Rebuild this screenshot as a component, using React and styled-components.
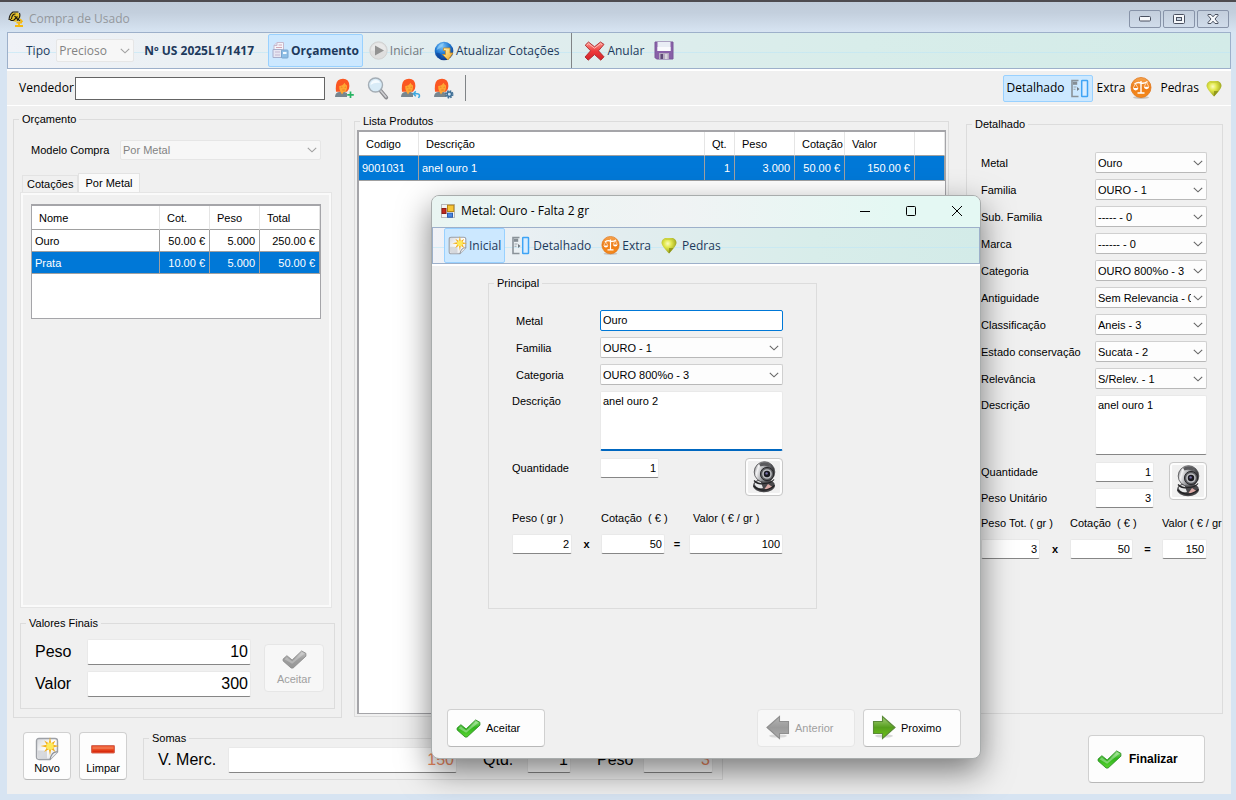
import React, { useEffect, useRef } from 'react'
import styled, { createGlobalStyle, css } from 'styled-components'

const GlobalStyle = createGlobalStyle`
    * {
        box-sizing: border-box;
    }
    body {
        margin: 0;
        background: #d7e4f2;
    }
    body, button, input, select, textarea {
        font-family: "Liberation Sans", Arial, sans-serif;
        font-size: 11px;
        line-height: 14px;
        color: #000;
    }
`

const uiFont = css`
    font-family: "Open Sans", "Noto Sans", sans-serif;
    font-size: 12px;
    line-height: 16px;
`

/* ---------- window ---------- */

const Window = styled.div`
    position: relative;
    min-height: 100vh;
    display: flex;
    flex-direction: column;
    border-top: 2px solid #4d4b4f;
`
const TitleBar = styled.header`
    ${uiFont}
    height: 30px;
    padding: 4px 7px 0 8px;
    display: flex;
    align-items: center;
    gap: 5px;
    background: linear-gradient(#c0ccda, #c3cfdd 35%, #d7e4f2);
    color: #94989d;
`
const TitleText = styled.span`
    flex: 1;
`
const CaptionButtons = styled.div`
    display: flex;
    gap: 2px;
`
const CaptionButton = styled.button`
    width: 32px;
    height: 18px;
    padding: 0;
    display: grid;
    place-items: center;
    border: 1px solid #8793a8;
    border-radius: 2px;
    background: linear-gradient(#c3cedc, #d0dcea);
`
const Client = styled.div`
    flex: 1;
    margin: 0 5px 6px 7px;
    display: flex;
    flex-direction: column;
    background: #f0f0f0;
`

/* ---------- toolbars ---------- */

const ToolStrip = styled.div`
    ${uiFont}
    height: 37px;
    display: flex;
    align-items: center;
    flex: none;
    gap: 2px;
    padding: 0 ${({ $inset }) => $inset}px;
    border: 1px solid #9db0ca;
    background:
        linear-gradient(transparent 19px, rgba(190, 230, 246, 0.6) 19px, rgba(190, 230, 246, 0.6) 20px, transparent 20px),
        linear-gradient(90deg, #f0f2f7, #e2edef 35%, #d8edea 70%, #d3ebe8);
    color: #1e395b;
`
const Edge = styled.div`
    height: ${({ $size }) => $size}px;
    flex: none;
    background: #fff;
`
const ToolButton = styled.button`
    ${uiFont}
    height: ${({ $height }) => $height || 35}px;
    display: flex;
    align-items: center;
    gap: ${({ $gap }) => $gap || 2}px;
    padding: 0 3px;
    border: 1px solid ${({ $active }) => ($active ? '#99d1ff' : 'transparent')};
    border-radius: 2px;
    background: ${({ $active }) => ($active ? '#cce8ff' : 'none')};
    color: ${({ $dark }) => ($dark ? '#000' : '#1e395b')};
    font-weight: ${({ $bold }) => ($bold ? 700 : 400)};
    white-space: nowrap;

    &:disabled {
        color: #75797d;
    }
`
const IconButton = styled.button`
    width: 24px;
    height: 26px;
    padding: 0;
    display: grid;
    place-items: center;
    border: none;
    background: none;
`
const TypeSelect = styled.div`
    margin-left: 4px;
`
const DocNumber = styled.strong`
    margin: 0 12px 0 8px;
    white-space: nowrap;
`
const ToolSeparator = styled.span`
    width: 1px;
    height: ${({ $height }) => $height}px;
    margin: 0 ${({ $gap }) => $gap}px;
    background: #808487;
`
const VendorBar = styled.div`
    ${uiFont}
    height: 34px;
    display: flex;
    align-items: center;
    padding: 0 5px 0 12px;
`
const VendorInput = styled.input`
    width: 250px;
    height: 23px;
    margin: 0 8px 0 1px;
    border: 1px solid #646464;
    background: #fff;
`
const VendorActions = styled.div`
    display: flex;
    gap: 9px;
    flex: 1;
    align-items: center;
`

/* ---------- form parts ---------- */

const Group = styled.fieldset`
    min-width: 0;
    margin: ${({ $margin }) => $margin || '0'};
    padding: 0;
    display: flex;
    flex-direction: column;
    border: 1px solid #dcdcdc;
`
const Legend = styled.legend`
    margin-left: 5px;
    padding: 0 3px;
    line-height: 14px;
`
const Label = styled.label`
    padding-left: ${({ $inset }) => $inset || 0}px;
    white-space: nowrap;
`
const BigLabel = styled.label`
    font-size: 16px;
    line-height: 20px;
    width: ${({ $width }) => $width}px;
`
const TextInput = styled.input`
    width: ${({ $width }) => $width || '100%'};
    min-width: 0;
    height: 20px;
    padding: 0 2px 1px;
    border: 1px solid #e9e9e9;
    border-bottom-color: #868686;
    border-radius: 2px;
    background: #fff;
    text-align: ${({ $left }) => ($left ? 'left' : 'right')};
    outline: none;
`
const FocusInput = styled(TextInput)`
    height: 21px;
    border: 1px solid #0078d7;
`
const BigInput = styled(TextInput)`
    height: 26px;
    font-size: 16px;
    line-height: 20px;
    color: ${({ $accent }) => ($accent ? '#f08a62' : '#000')};
`
const TextArea = styled.textarea`
    display: block;
    width: 100%;
    height: 60px;
    padding: 2px;
    border: 1px solid #e9e9e9;
    border-bottom: ${({ $active }) => ($active ? '2px solid #0067c0' : '1px solid #868686')};
    border-radius: 2px;
    background: #fff;
    resize: none;
    outline: none;
`
const SelectBox = styled.div`
    position: relative;
    width: ${({ $width }) => $width || 'auto'};

    svg {
        position: absolute;
        right: 4px;
        top: calc(50% - 3px);
        pointer-events: none;
    }
`
const NativeSelect = styled.select`
    ${({ $ui }) => $ui && uiFont}
    appearance: none;
    display: block;
    width: 100%;
    height: ${({ $height }) => $height || 21}px;
    padding: 0 15px 0 2px;
    border: 1px solid #d0d0d0;
    border-bottom-color: #b8b8b8;
    border-radius: 2px;
    background: #fdfdfd;

    &:disabled {
        border-color: #e6e6e6;
        background: #f7f7f7;
        color: #838383;
        opacity: 1;
    }

    &:disabled + svg {
        opacity: 0.6;
    }
`
const PushButton = styled.button`
    width: ${({ $width }) => $width}px;
    height: ${({ $height }) => $height}px;
    padding: ${({ $stacked }) => ($stacked ? '0' : '0 8px')};
    display: flex;
    flex-direction: ${({ $stacked }) => ($stacked ? 'column' : 'row')};
    align-items: center;
    justify-content: ${({ $stacked }) => ($stacked ? 'center' : 'flex-start')};
    gap: ${({ $gap }) => $gap || 0}px;
    border: 1px solid #d0d0d0;
    border-bottom-color: #b8b8b8;
    border-radius: 4px;
    background: #fdfdfd;
    font-weight: ${({ $bold }) => ($bold ? 700 : 400)};
    font-size: ${({ $bold }) => ($bold ? 12 : 11)}px;

    &:disabled {
        border-color: #e6e6e6;
        background: #f7f7f7;
        color: #a0a0a0;
    }
`
const CameraButton = styled.button`
    width: 38px;
    height: 38px;
    padding: 2px;
    display: grid;
    place-items: center;
    border: 1px solid #c8c8c8;
    border-radius: 4px;
    background: #f0f0f0;
    box-shadow: inset 0 0 0 2px #fdfdfd;
`

/* ---------- main layout ---------- */

const Columns = styled.main`
    flex: 1;
    padding: 6px 8px 0 6px;
    display: grid;
    grid-template-columns: 329px minmax(0, 1fr) 257px;
`
const BudgetBody = styled.div`
    flex: 1;
    padding: 14px 6px 8px;
    display: flex;
    flex-direction: column;
`
const ModelRow = styled.div`
    display: flex;
    align-items: center;
    justify-content: space-between;
    padding: 0 14px 0 11px;
`
const Tabs = styled.div`
    display: flex;
    align-items: flex-end;
    margin-top: 13px;
    padding-left: 2px;
`
const Tab = styled.button`
    height: ${({ $active }) => ($active ? 20 : 17)}px;
    padding: 0 ${({ $active }) => ($active ? 6 : 4)}px ${({ $active }) => ($active ? 2 : 0)}px;
    margin-bottom: ${({ $active }) => ($active ? -1 : 0)}px;
    border: 1px solid #e3e3e3;
    border-bottom: none;
    background: ${({ $active }) => ($active ? '#fafafa' : '#f0f0f0')};
`
const TabPanel = styled.div`
    flex: 1;
    margin-right: 3px;
    padding: 11px 10px;
    border: 1px solid #e5e5e5;
    background: #f0f0f0;
    box-shadow: inset 0 0 0 2px #fafafa;
`
const FinalsBody = styled.div`
    padding: 9px 10px 11px 14px;
    display: flex;
    align-items: center;
    gap: 13px;
`
const FinalsFields = styled.div`
    flex: 1;
    display: grid;
    grid-template-columns: auto 1fr;
    align-items: center;
    row-gap: 6px;
`
const ProductsBody = styled.div`
    flex: 1;
    display: flex;
    padding: 2px;
`
const DetailBody = styled.div`
    padding: 21px 15px 0 14px;
`
const FormGrid = styled.div`
    display: grid;
    grid-template-columns: ${({ $columns }) => $columns};
    gap: 6px 0;
    align-items: center;
`
const TopLabel = styled(Label)`
    align-self: start;
    padding-top: 3px;
`
const PairRow = styled.div`
    display: flex;
    justify-content: space-between;
    align-items: flex-start;
    margin-top: 7px;
`
const CalcGrid = styled.div`
    display: grid;
    grid-template-columns: ${({ $columns }) => $columns};
    row-gap: 9px;
    margin-top: ${({ $top }) => $top}px;
    align-items: center;
`
const CalcLabel = styled.label`
    grid-column: span ${({ $span }) => $span || 2};
    padding-left: ${({ $inset }) => $inset || 0}px;
    white-space: pre;
`
const Operator = styled.span`
    text-align: center;
    font-weight: 700;
`

/* ---------- grids ---------- */

const GridBox = styled.div`
    width: 100%;
    height: ${({ $height }) => $height || 'auto'};
    border: 1px solid #a5a5a9;
    border-top-width: 2px;
    border-left-width: ${({ $edge }) => $edge || 1}px;
    background: #fff;
`
const Table = styled.table`
    width: 100%;
    table-layout: fixed;
    border-spacing: 0;
`
const Th = styled.th`
    height: 24px;
    padding: 0 2px 0 7px;
    border-right: 1px solid #e5e5e5;
    border-bottom: 1px solid #a0a0a0;
    font-weight: 400;
    text-align: left;
    white-space: nowrap;
`
const Td = styled.td`
    height: ${({ $height }) => $height || 22}px;
    padding: 0 4px 0 3px;
    border-right: 1px solid #a0a0a0;
    border-bottom: 1px solid #a0a0a0;
    text-align: ${({ $right }) => ($right ? 'right' : 'left')};
    white-space: nowrap;
`
const Row = styled.tr`
    background: ${({ $selected }) => ($selected ? '#0078d7' : '#fff')};
    color: ${({ $selected }) => ($selected ? '#fff' : '#000')};
`

/* ---------- footer ---------- */

const Footer = styled.footer`
    display: flex;
    align-items: flex-end;
    padding: 13px 26px 11px 16px;
`
const FooterTools = styled.div`
    display: flex;
    align-items: flex-end;
    gap: 8px;
    padding-bottom: 3px;
`
const SumsBody = styled.div`
    display: flex;
    align-items: center;
    padding: 2px 9px 6px 14px;
`
const Spacer = styled.div`
    flex: 1;
    width: ${({ $width }) => $width || 0}px;
`
const SumGap = styled.span`
    width: 26px;
`

/* ---------- dialog ---------- */

const Dialog = styled.section`
    position: absolute;
    left: 431px;
    top: 193px;
    width: 550px;
    min-height: 564px;
    display: flex;
    flex-direction: column;
    overflow: hidden;
    border: 1px solid #a8acac;
    border-radius: 8px;
    background: #f0f0f0;
    box-shadow: 0 12px 32px rgba(0, 0, 0, 0.5);
`
const DialogTitle = styled.header`
    ${uiFont}
    height: 31px;
    display: flex;
    align-items: center;
    gap: 6px;
    padding: 0 15px 2px 9px;
    background: linear-gradient(90deg, #e9f5f2, #f0f3f4 45%, #e4f8f3 85%);
`
const DialogCaption = styled.button`
    width: 16px;
    height: 16px;
    margin-left: 24px;
    padding: 0;
    display: grid;
    place-items: center;
    border: none;
    background: none;
`
const DialogBody = styled.div`
    flex: 1;
    padding: 10px 0 0 56px;
`
const DialogGroup = styled(Group)`
    width: 329px;
`
const MainBody = styled.div`
    min-height: 318px;
    padding: 20px 33px 0 23px;
`
const DialogFooter = styled.footer`
    display: flex;
    gap: 8px;
    padding: 0 19px 11px 15px;
`

/* ---------- icons ---------- */

const Chevron = () => (
    <svg width="10" height="6" viewBox="0 0 10 6" fill="none" stroke="#666" strokeWidth="1.1">
        <path d="M0.8 0.8 L5 4.8 L9.2 0.8" />
    </svg>
)

const AppIcon = () => (
    <svg width="16" height="16" viewBox="0 0 16 16" fill="none">
        <path d="M4 1.5 H10 L12.5 6 L8 11 L1 9 Z" fill="#e9c32a" />
        <path d="M1 9 Q1.2 3.5 5 1 H10.5 M3.5 8 Q4 3 7.5 3 M9.5 5.5 L6 9 Q3 10.5 2 8 M6.5 5 L9.5 8 L12.5 10 M11.5 2 Q13 6 9 9.5" stroke="#1d1a10" strokeWidth="1.1" />
        <path d="M7 15 H15 M11 15 V12.5 M8.5 11.5 H14 M12 8 L14.5 11" stroke="#f5b90f" strokeWidth="1.8" />
    </svg>
)

const MinimizeGlyph = () => (
    <svg width="12" height="6" viewBox="0 0 12 6">
        <rect x="0.5" y="0.5" width="11" height="4.5" rx="1" fill="#f6f8fb" stroke="#4a5160" />
    </svg>
)

const RestoreGlyph = () => (
    <svg width="12" height="10" viewBox="0 0 12 10">
        <rect x="0.5" y="0.5" width="11" height="9" rx="1" fill="#f6f8fb" stroke="#4a5160" />
        <rect x="3.5" y="3.5" width="5" height="3" fill="#c9d5e3" stroke="#4a5160" />
    </svg>
)

const CloseGlyph = () => (
    <svg width="12" height="10" viewBox="0 0 12 10">
        <path d="M1 0.5 H4 L6 2.8 L8 0.5 H11 V1.5 L8 5 L11 8.5 V9.5 H8 L6 7.2 L4 9.5 H1 V8.5 L4 5 L1 1.5 Z" fill="#f6f8fb" stroke="#4a5160" />
    </svg>
)

const BudgetIcon = () => (
    <svg width="17" height="17" viewBox="0 0 17 17">
        <path d="M5 0.5 H11.5 V8 H2 V3.5 Z" fill="#f4f5fb" stroke="#c7b9cc" />
        <path d="M5 0.5 V3.5 H2" fill="#dcdff0" stroke="#c7b9cc" />
        <path d="M4 5.5 H10 M6.5 3 H10" stroke="#d3a7b4" />
        <path d="M1 7.5 H10 V15.5 H1 Z" fill="#e6e6f2" stroke="#a7aecb" />
        <path d="M3 10 H8 M3 13 H8" stroke="#c3b7d0" />
        <rect x="9.5" y="8" width="6.5" height="8" rx="0.8" fill="#8fbfe6" stroke="#7ba6cf" />
        <path d="M11 10 H14.5 V12 H11 Z" fill="#f4faff" />
    </svg>
)

const PlayIcon = () => (
    <svg width="19" height="19" viewBox="0 0 19 19">
        <circle cx="9.5" cy="9.5" r="8.7" fill="#dedede" stroke="#d0d0d0" />
        <path d="M2 9.5 A7.5 7.5 0 0 1 17 9.5 Z" fill="#e9e9e9" />
        <path d="M6 4.5 L15 9.5 L6 14.5 Z" fill="#929292" />
    </svg>
)

const GlobeIcon = () => (
    <svg width="20" height="20" viewBox="0 0 20 20">
        <defs>
            <radialGradient id="globe" cx="0.4" cy="0.25" r="0.8">
                <stop offset="0" stopColor="#7fc6f8" />
                <stop offset="0.5" stopColor="#1f78d2" />
                <stop offset="1" stopColor="#0a2f7e" />
            </radialGradient>
            <linearGradient id="down" x1="0" y1="0" x2="1" y2="1">
                <stop offset="0" stopColor="#fff6b8" />
                <stop offset="1" stopColor="#f0a31a" />
            </linearGradient>
        </defs>
        <circle cx="10" cy="10" r="9.3" fill="url(#globe)" />
        <path d="M2.5 9 Q4 3 10 2 Q9 6 2.5 9 Z" fill="#9bd7fb" opacity="0.6" />
        <path d="M2 12 Q5 11 7.5 14 L7 17.8 Q3 16 2 12 Z" fill="#0b3c8f" opacity="0.5" />
        <path d="M9.5 7 H16 V12 H19 L14 19 L8.5 13.5 H11.5 V9.5 H9.5 Z" fill="url(#down)" stroke="#c98c22" strokeWidth="0.8" />
    </svg>
)

const CancelIcon = () => (
    <svg width="21" height="20" viewBox="0 0 21 20">
        <defs>
            <linearGradient id="cross" x1="0" y1="0" x2="0" y2="1">
                <stop offset="0" stopColor="#ff9a90" />
                <stop offset="0.5" stopColor="#ee3a3a" />
                <stop offset="1" stopColor="#d2222a" />
            </linearGradient>
        </defs>
        <path d="M1.2 4.2 L4.5 1 L10.5 5.8 L16.5 1 L20 3.4 L14.5 9.8 L20 15.8 L16.8 19.2 L10.5 13.6 L4.2 19.2 L1 16 L6.6 9.8 Z" fill="url(#cross)" stroke="#a9282c" strokeWidth="0.9" strokeLinejoin="round" />
        <path d="M3 4.2 L4.6 2.6 L10.5 7.2 L16.6 2.6 L18 3.6" fill="none" stroke="#ffc4bd" strokeWidth="0.9" />
    </svg>
)

const SaveIcon = () => (
    <svg width="20" height="19" viewBox="0 0 20 19">
        <path d="M1 1 H19 V18 H2.5 L1 16.5 Z" fill="#8860a8" stroke="#7b5799" />
        <path d="M3.5 1 H16.5 V10 H3.5 Z" fill="#e9edf5" />
        <path d="M3.5 6 H16.5 V10 H3.5 Z" fill="#f9fafd" />
        <path d="M5 12 H15 V18 H5 Z" fill="#b4aabf" />
        <path d="M6.5 13 H9 V18 H6.5 Z" fill="#5f4a78" />
        <path d="M11 13 H13.5 V18 H11 Z" fill="#d8d3de" />
    </svg>
)

const PersonIcon = ({ badge }) => (
    <svg width="21" height="21" viewBox="0 0 21 21">
        <path d="M1 19 Q1.2 14.5 5 14 L8 13 L13 15 V19 Z" fill="#78868f" />
        <path d="M2 13.8 Q1.6 11 2 7 Q2.8 0.8 9 0.8 Q15.2 0.8 15.4 8 Q15.4 12 13 13.8 Z" fill="#fb5722" />
        <path d="M5.2 8 Q8.5 8 10.5 4.8 Q11.5 7 13 7.4 Q13.6 13.5 9.5 14.2 L8 16.6 L6.5 14 Q5 11.5 5.2 8 Z" fill="#ffa733" />
        <path d="M6.8 9.6 Q7.6 8.8 8.4 9.6 M10.6 9.6 Q11.4 8.8 12.2 9.6 M8.3 12 H10.8" fill="none" stroke="#e07a1c" strokeWidth="0.8" />
        {badge === 'add' && <path d="M16.5 13.5 V20 M13.2 16.8 H19.8" stroke="#28b463" strokeWidth="1.7" />}
        {badge === 'undo' && <path d="M13.5 15.8 H17 Q19.5 15.8 19.5 18 L18.5 20 M15.8 13.4 L13.4 15.8 L15.8 18.2" fill="none" stroke="#3fa9e0" strokeWidth="1.5" />}
        {badge === 'gear' && (
            <>
                <circle cx="16.3" cy="16.3" r="3.4" fill="none" stroke="#3f6f96" strokeWidth="1.6" strokeDasharray="1.6 1.07" />
                <circle cx="16.3" cy="16.3" r="2.2" fill="#cfe4f5" stroke="#3f6f96" strokeWidth="1.5" />
            </>
        )}
    </svg>
)

const SearchIcon = () => (
    <svg width="22" height="24" viewBox="0 0 22 24">
        <path d="M13 14 L19.2 21.5" stroke="#8a8a8e" strokeWidth="3.8" strokeLinecap="round" />
        <path d="M13.5 14.5 L19 21" stroke="#cfcfd2" strokeWidth="1.6" strokeLinecap="round" />
        <circle cx="8.5" cy="9" r="7" fill="#d8ebf7" stroke="#a4adb5" strokeWidth="1.4" />
        <path d="M3.5 9 Q4 4.5 8.5 4 Q12 4 13 7 Q8 6 3.5 9 Z" fill="#f5fbff" />
    </svg>
)

const PanelIcon = () => (
    <svg width="19" height="19" viewBox="0 0 19 19" fill="none">
        <path d="M8.5 1.5 H2 V17.5 H8.5" stroke="#8a9299" strokeWidth="1.6" />
        <rect x="3" y="2.6" width="4.2" height="3.2" fill="#868e95" />
        <path d="M3.5 8 H6.5 M3.5 10.2 H5.5" stroke="#9aa1a7" strokeWidth="1.1" />
        <path d="M7 8 L9.5 10 L7 12 Z" fill="#717980" />
        <rect x="11.7" y="1.4" width="5.8" height="16.2" rx="0.6" stroke="#3fa4f5" strokeWidth="1.5" fill="#d9edff" />
    </svg>
)

const ScaleIcon = ({ size = 22 }) => (
    <svg width={size} height={size} viewBox="0 0 22 22" fill="none">
        <defs>
            <linearGradient id="orange" x1="0" y1="0" x2="0" y2="1">
                <stop offset="0" stopColor="#f6a550" />
                <stop offset="0.5" stopColor="#ee7d17" />
                <stop offset="1" stopColor="#f58a1c" />
            </linearGradient>
        </defs>
        <ellipse cx="11" cy="20.5" rx="8" ry="1.4" fill="#c9c3bd" />
        <circle cx="11" cy="10.5" r="10" fill="url(#orange)" stroke="#e0761a" strokeWidth="0.8" />
        <path d="M11 4 V15.5 M7.5 16 H14.5 M4.5 7 Q8 4.5 11 6 Q14 7 17.5 4.5" stroke="#fff" strokeWidth="1.4" />
        <path d="M5.5 6.8 L3.2 11 M5.5 6.8 L8 11 M16.5 5.2 L14.2 9.8 M16.5 5.2 L18.8 9.8" stroke="#ffe9d2" strokeWidth="0.8" />
        <path d="M3 11 H8.4 Q8 13.4 5.7 13.4 Q3.4 13.4 3 11 Z M13.8 9.8 H19.2 Q18.8 12.2 16.5 12.2 Q14.2 12.2 13.8 9.8 Z" fill="#fff" />
    </svg>
)

const GemIcon = () => (
    <svg width="16" height="17" viewBox="0 0 16 17">
        <defs>
            <radialGradient id="gem" cx="0.42" cy="0.36" r="0.62">
                <stop offset="0" stopColor="#fbfcc0" />
                <stop offset="0.4" stopColor="#e2e84c" />
                <stop offset="1" stopColor="#98a01c" />
            </radialGradient>
        </defs>
        <path d="M4 1 H12 Q15.5 2.5 15.5 6 Q15 9.5 8 16.5 Q1 9.5 0.5 6 Q0.5 2.5 4 1 Z" fill="url(#gem)" />
        <path d="M8 11 V16.5 L12.5 11 Z" fill="#808812" opacity="0.7" />
        <path d="M4.5 2.2 H11.5 L13 4" fill="none" stroke="#c3ca3c" strokeWidth="1" />
    </svg>
)

const NewIcon = ({ size = 24 }) => (
    <svg width={size} height={size} viewBox="0 0 24 24">
        <defs>
            <linearGradient id="sheet" x1="0" y1="0" x2="1" y2="1">
                <stop offset="0" stopColor="#d6d8dc" />
                <stop offset="0.5" stopColor="#ffffff" />
                <stop offset="1" stopColor="#d8dade" />
            </linearGradient>
        </defs>
        <path d="M4 1.5 H20 Q22.5 1.5 22.5 4 V15 L15 22.5 H4 Q1.5 22.5 1.5 20 V4 Q1.5 1.5 4 1.5 Z" fill="url(#sheet)" stroke="#9da0a6" strokeWidth="1.4" />
        <path d="M22.5 15 Q17 14 15 22.5" fill="#eceef1" stroke="#8c9098" strokeWidth="1.2" />
        <path d="M2.5 13.5 H12 V21.8 H4 Q2.5 21.5 2.5 20 Z" fill="#c7cad0" opacity="0.7" />
        <path d="M15 0 L16.2 6.2 L20.5 3.5 L18.2 7.8 L24 9 L18.2 10.4 L20.5 15 L16.2 12.2 L15 18.5 L13.8 12.2 L9.2 15 L11.8 10.4 L5.5 9 L11.8 7.8 L9.2 3.5 L13.8 6.2 Z" fill="#f3b01c" />
        <circle cx="15" cy="9.2" r="3.6" fill="#fde95c" />
    </svg>
)

const MinusIcon = () => (
    <svg width="24" height="24" viewBox="0 0 24 24">
        <rect x="0.5" y="8.5" width="23" height="7.5" rx="0.6" fill="#ea4a20" stroke="#d2695a" />
        <rect x="1.5" y="9.5" width="21" height="2.6" fill="#f17048" />
        <rect x="1.5" y="13.5" width="21" height="1.8" fill="#d92c10" />
    </svg>
)

const CheckIcon = ({ gray }) => (
    <svg width="25" height="19" viewBox="0 0 26 20">
        <defs>
            <linearGradient id={gray ? 'checkGray' : 'checkGreen'} x1="0" y1="0" x2="0" y2="1">
                <stop offset="0" stopColor={gray ? '#c6c6c6' : '#8be07a'} />
                <stop offset="0.45" stopColor={gray ? '#a0a0a0' : '#2fb51c'} />
                <stop offset="1" stopColor={gray ? '#969696' : '#58d430'} />
            </linearGradient>
        </defs>
        <path d="M1 9.5 L5 6 L10.5 10.5 L20.5 1 L25 3.5 V6.5 L11.5 19 H9.5 L1 11.5 Z" fill={`url(#${gray ? 'checkGray' : 'checkGreen'})`} stroke={gray ? '#8b8b8b' : '#2c8c22'} strokeWidth="0.9" strokeLinejoin="round" />
        <path d="M2.5 9.8 L5 7.6 L10.5 12 L20.8 2.4 L23.5 4 L10.5 14.5 Z" fill="#fff" opacity={gray ? 0.25 : 0.35} />
    </svg>
)

const ArrowIcon = ({ back }) => (
    <svg width="24" height="26" viewBox="0 0 24 26">
        <defs>
            <linearGradient id={back ? 'arrowGray' : 'arrowGreen'} x1="0" y1="0" x2="0" y2="1">
                <stop offset="0" stopColor={back ? '#b4b4b4' : '#a6cf7a'} />
                <stop offset="0.5" stopColor={back ? '#9b9b9b' : '#569f1d'} />
                <stop offset="1" stopColor={back ? '#adadad' : '#6ec614'} />
            </linearGradient>
        </defs>
        <ellipse cx="12" cy="21" rx="9" ry="1.6" fill="#d8d8d8" />
        <path
            d={back ? 'M1 12.5 L13.5 1.5 V6.5 H22.5 V18.5 H13.5 V23.5 Z' : 'M23 12.5 L10.5 1.5 V6.5 H1.5 V18.5 H10.5 V23.5 Z'}
            fill={`url(#${back ? 'arrowGray' : 'arrowGreen'})`}
            stroke={back ? '#8f8f8f' : '#5b8a38'}
            strokeWidth="1.1"
        />
    </svg>
)

const CameraIcon = () => (
    <svg width="26" height="32" viewBox="0 0 26 32">
        <defs>
            <linearGradient id="camBody" x1="0" y1="0.2" x2="1" y2="0.5">
                <stop offset="0" stopColor="#6f7073" />
                <stop offset="0.2" stopColor="#f4f4f5" />
                <stop offset="0.45" stopColor="#a9aaad" />
                <stop offset="0.75" stopColor="#55565a" />
                <stop offset="1" stopColor="#2c2c2f" />
            </linearGradient>
        </defs>
        <ellipse cx="13" cy="24.5" rx="11" ry="6.8" fill="#49484b" />
        <path d="M3.5 23 Q6 18.5 9.5 20.5 L12 27 Q6 28.5 3.5 23 Z" fill="#e6e7e8" />
        <path d="M13.5 28 L17 23 L21.5 26 Q18 29.5 13.5 28 Z" fill="#dbaaa6" />
        <circle cx="13.5" cy="11" r="10.3" fill="url(#camBody)" stroke="#4a4a4d" strokeWidth="0.8" />
        <path d="M8 2.8 Q13.5 -0.5 19.5 3.2 L17.5 5.8 Q13 3.8 9.5 5.6 Z" fill="#5a5a5d" />
        <circle cx="16" cy="13" r="6.6" fill="#5c5d60" stroke="#2a2a2d" />
        <circle cx="16" cy="13" r="4.8" fill="#bcbdc1" />
        <circle cx="16" cy="13" r="3.2" fill="#18181e" />
        <circle cx="15.6" cy="12.4" r="1.2" fill="#7771a8" />
        <path d="M3 19.5 Q7 24 13 22.5 Q20 22.5 23 18.5" fill="none" stroke="#232325" strokeWidth="1.2" />
        <path d="M2.5 25 Q13 33.5 23.5 24.5" fill="none" stroke="#1f1f21" strokeWidth="1.3" />
    </svg>
)

const FormIcon = () => (
    <svg width="14" height="14" viewBox="0 0 14 14">
        <rect x="0.5" y="0.5" width="13" height="13" fill="#f3f3f3" stroke="#b8b8b8" />
        <rect x="1" y="4.5" width="4" height="5" fill="#c2281e" stroke="#8c1f18" />
        <rect x="6.5" y="1.2" width="6.3" height="6.3" fill="#f7c536" stroke="#b88712" />
        <rect x="6.5" y="9.2" width="5" height="4" fill="#4a86e0" stroke="#2a5cb0" />
    </svg>
)

/* ---------- data ---------- */

const details = [
    { id: 'metal', label: 'Metal', value: 'Ouro' },
    { id: 'familia', label: 'Familia', value: 'OURO - 1' },
    { id: 'sub', label: 'Sub. Familia', value: '----- - 0' },
    { id: 'marca', label: 'Marca', value: '------ - 0' },
    { id: 'categoria', label: 'Categoria', value: 'OURO 800%o - 3' },
    { id: 'antiguidade', label: 'Antiguidade', value: 'Sem Relevancia - 0' },
    { id: 'classificacao', label: 'Classificação', value: 'Aneis - 3' },
    { id: 'estado', label: 'Estado conservação', value: 'Sucata - 2' },
    { id: 'relevancia', label: 'Relevância', value: 'S/Relev. - 1' },
]

const metals = [
    { name: 'Ouro', price: '50.00 €', weight: '5.000', total: '250.00 €' },
    { name: 'Prata', price: '10.00 €', weight: '5.000', total: '50.00 €', selected: true },
]

const Select = ({ id, value, width, ...rest }) => (
    <SelectBox $width={width}>
        <NativeSelect id={id} defaultValue={value} {...rest}>
            <option>{value}</option>
        </NativeSelect>
        <Chevron />
    </SelectBox>
)

const MainToolbar = () => (
    <ToolStrip $inset={18}>
        <Label htmlFor="tipo">Tipo</Label>
        <TypeSelect>
            <Select id="tipo" value="Precioso" width="78px" disabled $ui $height={23} />
        </TypeSelect>
        <DocNumber>Nº US 2025L1/1417</DocNumber>
        <ToolButton $active $bold $height={33}><BudgetIcon />Orçamento</ToolButton>
        <ToolButton disabled><PlayIcon />Iniciar</ToolButton>
        <ToolButton><GlobeIcon />Atualizar Cotações</ToolButton>
        <ToolSeparator $height={35} $gap={6} />
        <ToolButton><CancelIcon />Anular</ToolButton>
        <ToolButton aria-label="Guardar"><SaveIcon /></ToolButton>
    </ToolStrip>
)

const VendorToolbar = () => (
    <VendorBar>
        <Label htmlFor="vendedor">Vendedor</Label>
        <VendorInput id="vendedor" />
        <VendorActions>
            <IconButton aria-label="Novo vendedor"><PersonIcon badge="add" /></IconButton>
            <IconButton aria-label="Procurar"><SearchIcon /></IconButton>
            <IconButton aria-label="Repor vendedor"><PersonIcon badge="undo" /></IconButton>
            <IconButton aria-label="Editar vendedor"><PersonIcon badge="gear" /></IconButton>
            <ToolSeparator $height={26} $gap={0} />
        </VendorActions>
        <ToolButton $active $dark $height={27} $gap={5}>Detalhado<PanelIcon /></ToolButton>
        <ToolButton $dark $height={27} $gap={5}>Extra<ScaleIcon /></ToolButton>
        <ToolButton $dark $height={27} $gap={7}>Pedras<GemIcon /></ToolButton>
    </VendorBar>
)

const Budget = () => (
    <Group>
        <Legend>Orçamento</Legend>
        <BudgetBody>
            <ModelRow>
                <Label htmlFor="modelo">Modelo Compra</Label>
                <Select id="modelo" value="Por Metal" width="201px" disabled $height={20} />
            </ModelRow>
            <Tabs role="tablist">
                <Tab role="tab">Cotações</Tab>
                <Tab role="tab" aria-selected="true" $active>Por Metal</Tab>
            </Tabs>
            <TabPanel role="tabpanel">
                <GridBox $height="115px">
                    <Table>
                        <colgroup>
                            <col />
                            <col width="50" />
                            <col width="50" />
                            <col width="60" />
                        </colgroup>
                        <thead>
                            <tr>
                                <Th>Nome</Th>
                                <Th>Cot.</Th>
                                <Th>Peso</Th>
                                <Th>Total</Th>
                            </tr>
                        </thead>
                        <tbody>
                            {metals.map((m) => (
                                <Row key={m.name} $selected={m.selected}>
                                    <Td>{m.name}</Td>
                                    <Td $right>{m.price}</Td>
                                    <Td $right>{m.weight}</Td>
                                    <Td $right>{m.total}</Td>
                                </Row>
                            ))}
                        </tbody>
                    </Table>
                </GridBox>
            </TabPanel>
            <Group $margin="8px 0 0">
                <Legend>Valores Finais</Legend>
                <FinalsBody>
                    <FinalsFields>
                        <BigLabel htmlFor="final-peso" $width={52}>Peso</BigLabel>
                        <BigInput id="final-peso" defaultValue="10" />
                        <BigLabel htmlFor="final-valor" $width={52}>Valor</BigLabel>
                        <BigInput id="final-valor" defaultValue="300" />
                    </FinalsFields>
                    <PushButton $width={60} $height={48} $stacked $gap={3} disabled>
                        <CheckIcon gray />
                        Aceitar
                    </PushButton>
                </FinalsBody>
            </Group>
        </BudgetBody>
    </Group>
)

const Products = () => (
    <Group $margin="2px 17px 1px 12px">
        <Legend>Lista Produtos</Legend>
        <ProductsBody>
            <GridBox $edge={2}>
                <Table>
                    <colgroup>
                        <col width="60" />
                        <col />
                        <col width="30" />
                        <col width="60" />
                        <col width="50" />
                        <col width="70" />
                        <col width="30" />
                    </colgroup>
                    <thead>
                        <tr>
                            <Th>Codigo</Th>
                            <Th>Descrição</Th>
                            <Th>Qt.</Th>
                            <Th>Peso</Th>
                            <Th>Cotação</Th>
                            <Th>Valor</Th>
                            <Th />
                        </tr>
                    </thead>
                    <tbody>
                        <Row $selected>
                            <Td $height={25}>9001031</Td>
                            <Td>anel ouro 1</Td>
                            <Td $right>1</Td>
                            <Td $right>3.000</Td>
                            <Td $right>50.00 €</Td>
                            <Td $right>150.00 €</Td>
                            <Td />
                        </Row>
                    </tbody>
                </Table>
            </GridBox>
        </ProductsBody>
    </Group>
)

const Details = () => (
    <Group $margin="5px 0 4px">
        <Legend>Detalhado</Legend>
        <DetailBody>
            <FormGrid $columns="114px 1fr">
                {details.map(({ id, label, value }) => (
                    <React.Fragment key={id}>
                        <Label htmlFor={`det-${id}`}>{label}</Label>
                        <Select id={`det-${id}`} value={value} />
                    </React.Fragment>
                ))}
                <TopLabel htmlFor="det-descricao">Descrição</TopLabel>
                <TextArea id="det-descricao" defaultValue="anel ouro 1" />
            </FormGrid>
            <PairRow>
                <FormGrid $columns="114px 59px">
                    <Label htmlFor="det-qtd">Quantidade</Label>
                    <TextInput id="det-qtd" defaultValue="1" />
                    <Label htmlFor="det-unit">Peso Unitário</Label>
                    <TextInput id="det-unit" defaultValue="3" />
                </FormGrid>
                <CameraButton aria-label="Fotografar"><CameraIcon /></CameraButton>
            </PairRow>
            <CalcGrid $columns="59px 30px 63px 29px minmax(0, 1fr)" $top={8}>
                <CalcLabel htmlFor="det-peso">Peso Tot. ( gr )</CalcLabel>
                <CalcLabel htmlFor="det-cot">{'Cotação  ( € )'}</CalcLabel>
                <CalcLabel htmlFor="det-valor" $span={1}>Valor ( € / gr</CalcLabel>
                <TextInput id="det-peso" defaultValue="3" />
                <Operator>x</Operator>
                <TextInput id="det-cot" defaultValue="50" />
                <Operator>=</Operator>
                <TextInput id="det-valor" defaultValue="150" />
            </CalcGrid>
        </DetailBody>
    </Group>
)

const MetalDialog = () => {
    const description = useRef(null)

    useEffect(() => {
        const el = description.current
        el.focus()
        el.setSelectionRange(el.value.length, el.value.length)
    }, [])

    return (
        <Dialog role="dialog" aria-labelledby="dialog-title">
            <DialogTitle>
                <FormIcon />
                <TitleText id="dialog-title">Metal: Ouro - Falta 2 gr</TitleText>
                <DialogCaption aria-label="Minimizar">
                    <svg width="12" height="12" viewBox="0 0 12 12" stroke="#000"><path d="M1 6.5 H11" /></svg>
                </DialogCaption>
                <DialogCaption aria-label="Maximizar">
                    <svg width="12" height="12" viewBox="0 0 12 12" stroke="#000" fill="none"><rect x="1.5" y="1.5" width="9" height="9" rx="1" /></svg>
                </DialogCaption>
                <DialogCaption aria-label="Fechar">
                    <svg width="12" height="12" viewBox="0 0 12 12" stroke="#000"><path d="M1 1 L11 11 M11 1 L1 11" /></svg>
                </DialogCaption>
            </DialogTitle>
            <ToolStrip $inset={11}>
                <ToolButton $active><NewIcon size={19} />Inicial</ToolButton>
                <ToolButton $gap={3}><PanelIcon />Detalhado</ToolButton>
                <ToolButton><ScaleIcon size={19} />Extra</ToolButton>
                <ToolButton $gap={5}><GemIcon />Pedras</ToolButton>
            </ToolStrip>
            <Edge $size={2} />
            <DialogBody>
                <DialogGroup>
                    <Legend>Principal</Legend>
                    <MainBody>
                        <FormGrid $columns="88px 1fr">
                            <Label htmlFor="metal" $inset={4}>Metal</Label>
                            <FocusInput id="metal" defaultValue="Ouro" $left />
                            <Label htmlFor="familia" $inset={4}>Familia</Label>
                            <Select id="familia" value="OURO - 1" />
                            <Label htmlFor="categoria" $inset={4}>Categoria</Label>
                            <Select id="categoria" value="OURO 800%o - 3" />
                            <TopLabel htmlFor="descricao">Descrição</TopLabel>
                            <TextArea id="descricao" ref={description} defaultValue="anel ouro 2" $active />
                        </FormGrid>
                        <PairRow>
                            <FormGrid $columns="88px 59px">
                                <Label htmlFor="quantidade">Quantidade</Label>
                                <TextInput id="quantidade" defaultValue="1" />
                            </FormGrid>
                            <CameraButton aria-label="Fotografar"><CameraIcon /></CameraButton>
                        </PairRow>
                        <CalcGrid $columns="60px 29px 64px 24px minmax(0, 1fr)" $top={15}>
                            <CalcLabel htmlFor="peso">Peso ( gr )</CalcLabel>
                            <CalcLabel htmlFor="cotacao">{'Cotação  ( € )'}</CalcLabel>
                            <CalcLabel htmlFor="valor" $span={1} $inset={4}>Valor ( € / gr )</CalcLabel>
                            <TextInput id="peso" defaultValue="2" />
                            <Operator>x</Operator>
                            <TextInput id="cotacao" defaultValue="50" />
                            <Operator>=</Operator>
                            <TextInput id="valor" defaultValue="100" />
                        </CalcGrid>
                    </MainBody>
                </DialogGroup>
            </DialogBody>
            <DialogFooter>
                <PushButton $width={98} $height={38} $gap={5}><CheckIcon />Aceitar</PushButton>
                <Spacer />
                <PushButton $width={98} $height={38} $gap={5} disabled><ArrowIcon back />Anterior</PushButton>
                <PushButton $width={98} $height={38} $gap={5}><ArrowIcon />Proximo</PushButton>
            </DialogFooter>
        </Dialog>
    )
}

const App = () => {
    return (
        <>
            <GlobalStyle />
            <Window>
                <TitleBar>
                    <AppIcon />
                    <TitleText>Compra de Usado</TitleText>
                    <CaptionButtons>
                        <CaptionButton aria-label="Minimizar"><MinimizeGlyph /></CaptionButton>
                        <CaptionButton aria-label="Restaurar"><RestoreGlyph /></CaptionButton>
                        <CaptionButton aria-label="Fechar"><CloseGlyph /></CaptionButton>
                    </CaptionButtons>
                </TitleBar>
                <Client>
                    <MainToolbar />
                    <Edge $size={2} />
                    <VendorToolbar />
                    <Edge $size={1} />
                    <Columns>
                        <Budget />
                        <Products />
                        <Details />
                    </Columns>
                    <Footer>
                        <FooterTools>
                            <PushButton $width={48} $height={48} $stacked><NewIcon />Novo</PushButton>
                            <PushButton $width={48} $height={48} $stacked><MinusIcon />Limpar</PushButton>
                            <Group $margin="0 0 0 8px">
                                <Legend>Somas</Legend>
                                <SumsBody>
                                    <BigLabel htmlFor="soma-merc" $width={70}>V. Merc.</BigLabel>
                                    <BigInput id="soma-merc" defaultValue="150" $width="229px" $accent />
                                    <SumGap />
                                    <BigLabel htmlFor="soma-qtd" $width={44}>Qtd.</BigLabel>
                                    <BigInput id="soma-qtd" defaultValue="1" $width="44px" />
                                    <SumGap />
                                    <BigLabel htmlFor="soma-peso" $width={46}>Peso</BigLabel>
                                    <BigInput id="soma-peso" defaultValue="3" $width="70px" $accent />
                                </SumsBody>
                            </Group>
                        </FooterTools>
                        <Spacer />
                        <PushButton $width={117} $height={48} $gap={7} $bold><CheckIcon />Finalizar</PushButton>
                    </Footer>
                </Client>
                <MetalDialog />
            </Window>
        </>
    )
}

export default App
